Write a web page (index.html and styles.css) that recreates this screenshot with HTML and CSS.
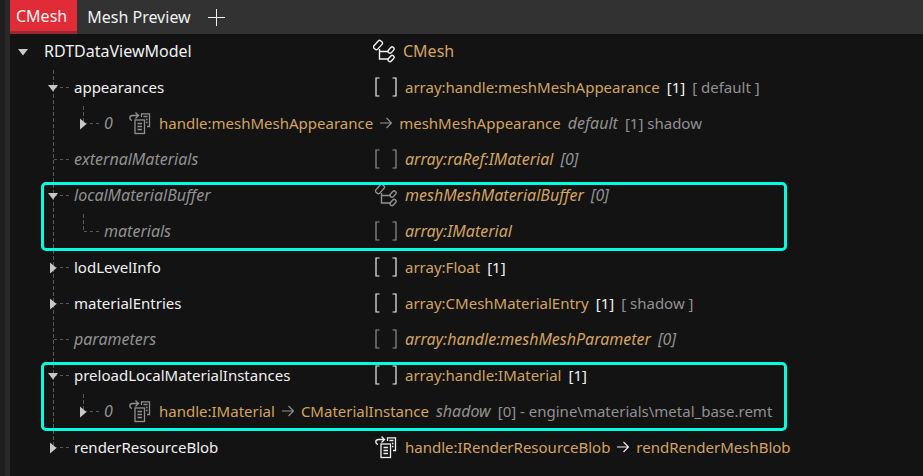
FILE: index.html
```html
<!DOCTYPE html>
<html lang="en">
<head>
<meta charset="utf-8">
<title>CMesh</title>
<link rel="stylesheet" href="styles.css">
</head>
<body>
<svg class="defs" aria-hidden="true">
  <symbol id="class" viewBox="0 0 22 24">
    <g fill="none" stroke="currentColor" stroke-width="1.4">
      <rect x="0" y="3.600" width="10" height="5" rx="1.800" transform="rotate(-48 5 6.100)"/>
      <path d="M6.500 10V20H15M6.500 12.500H15"/>
      <rect x="14.600" y="9.200" width="7" height="3.800" rx="1.800" transform="rotate(-48 18.100 11.100)"/>
      <rect x="14.600" y="17.600" width="7" height="3.800" rx="1.800" transform="rotate(-48 18.100 19.500)"/>
    </g>
  </symbol>
  <symbol id="array" viewBox="0 0 22 24">
    <path d="M4.500 3H1V21H4.500M17.500 3H21V21H17.500" fill="none" stroke="currentColor" stroke-width="1.200"/>
  </symbol>
  <symbol id="handle" viewBox="0 0 22 24">
    <g fill="none" stroke="currentColor" stroke-width="1.300">
      <path d="M3 9.500C0 8.500 0 4.500 3.500 4.500H9M6.500 1.500l3 3-3 3"/>
      <path d="M12.500 6V2.800H20.500V15.500H18M14.500 5.500H18.500M17 8.500H18.500M17 11.500H18.500"/>
      <rect x="6" y="9" width="9.500" height="13.500"/>
      <path d="M8.500 12.500H13M8.500 15.500H13M8.500 18.500H13"/>
    </g>
  </symbol>
  <symbol id="arrow" viewBox="0 0 12 12">
    <path d="M0 6H11.500M6.500 1l5 5-5 5" fill="none" stroke="currentColor" stroke-width="1.200"/>
  </symbol>
  <symbol id="open" viewBox="0 0 12 12">
    <path d="M1 3H11L6 9.500Z" fill="currentColor"/>
  </symbol>
  <symbol id="closed" viewBox="0 0 12 12">
    <path d="M3 .5V11.500L9.500 6Z" fill="currentColor"/>
  </symbol>
</svg>
<main class="panel">
  <nav class="tabs" aria-label="Views">
    <button class="tab active">CMesh</button>
    <button class="tab">Mesh Preview</button>
    <button class="add" aria-label="Add tab"><svg viewBox="0 0 18 18"><path d="M9.500 1V18M1 9.500H18" stroke="currentColor" stroke-width="1"/></svg></button>
  </nav>
  <ul class="tree">
    <li>
      <div class="row">
        <button class="gutter" aria-label="Collapse RDTDataViewModel"><svg><use href="#open"/></svg></button>
        <span class="name">RDTDataViewModel</span>
        <span class="value"><svg class="icon"><use href="#class"/></svg><span class="type">CMesh</span></span>
      </div>
      <ul class="branch">
        <li>
          <div class="row">
            <button class="gutter stub" aria-label="Collapse appearances"><svg><use href="#open"/></svg></button>
            <span class="name">appearances</span>
            <span class="value"><svg class="icon"><use href="#array"/></svg><span class="type">array:handle:meshMeshAppearance</span><span>[1]</span><span class="muted">[ default ]</span></span>
          </div>
          <ul class="branch">
            <li>
              <div class="row unset">
                <button class="gutter stub" aria-label="Expand item 0"><svg><use href="#closed"/></svg></button>
                <span class="index">0</span>
                <span class="value upright"><svg class="icon"><use href="#handle"/></svg><span class="type">handle:meshMeshAppearance</span><svg class="arrow"><use href="#arrow"/></svg><span class="type">meshMeshAppearance</span><em>default</em><span>[1] shadow</span></span>
              </div>
            </li>
          </ul>
        </li>
        <li>
          <div class="row unset">
            <span class="gutter stub"></span>
            <span class="name">externalMaterials</span>
            <span class="value"><svg class="icon"><use href="#array"/></svg><span class="type">array:raRef:IMaterial</span><span>[0]</span></span>
          </div>
        </li>
        <li class="marked">
          <div class="row unset">
            <button class="gutter stub" aria-label="Collapse localMaterialBuffer"><svg><use href="#open"/></svg></button>
            <span class="name">localMaterialBuffer</span>
            <span class="value"><svg class="icon"><use href="#class"/></svg><span class="type">meshMeshMaterialBuffer</span><span>[0]</span></span>
          </div>
          <ul class="branch">
            <li>
              <div class="row unset">
                <span class="gutter stub"></span>
                <span class="name">materials</span>
                <span class="value"><svg class="icon"><use href="#array"/></svg><span class="type">array:IMaterial</span></span>
              </div>
            </li>
          </ul>
        </li>
        <li>
          <div class="row">
            <button class="gutter stub" aria-label="Expand lodLevelInfo"><svg><use href="#closed"/></svg></button>
            <span class="name">lodLevelInfo</span>
            <span class="value"><svg class="icon"><use href="#array"/></svg><span class="type">array:Float</span><span>[1]</span></span>
          </div>
        </li>
        <li>
          <div class="row">
            <button class="gutter stub" aria-label="Expand materialEntries"><svg><use href="#closed"/></svg></button>
            <span class="name">materialEntries</span>
            <span class="value"><svg class="icon"><use href="#array"/></svg><span class="type">array:CMeshMaterialEntry</span><span>[1]</span><span class="muted">[ shadow ]</span></span>
          </div>
        </li>
        <li>
          <div class="row unset">
            <span class="gutter stub"></span>
            <span class="name">parameters</span>
            <span class="value"><svg class="icon"><use href="#array"/></svg><span class="type">array:handle:meshMeshParameter</span><span>[0]</span></span>
          </div>
        </li>
        <li class="marked">
          <div class="row">
            <button class="gutter stub" aria-label="Collapse preloadLocalMaterialInstances"><svg><use href="#open"/></svg></button>
            <span class="name">preloadLocalMaterialInstances</span>
            <span class="value"><svg class="icon"><use href="#array"/></svg><span class="type">array:handle:IMaterial</span><span>[1]</span></span>
          </div>
          <ul class="branch">
            <li>
              <div class="row unset">
                <button class="gutter stub" aria-label="Expand item 0"><svg><use href="#closed"/></svg></button>
                <span class="index">0</span>
                <span class="value upright"><svg class="icon"><use href="#handle"/></svg><span class="type">handle:IMaterial</span><svg class="arrow"><use href="#arrow"/></svg><span class="type">CMaterialInstance</span><em>shadow</em><span>[0] - engine\materials\metal_base.remt</span></span>
              </div>
            </li>
          </ul>
        </li>
        <li>
          <div class="row">
            <button class="gutter stub" aria-label="Expand renderResourceBlob"><svg><use href="#closed"/></svg></button>
            <span class="name">renderResourceBlob</span>
            <span class="value"><svg class="icon"><use href="#handle"/></svg><span class="type">handle:IRenderResourceBlob</span><svg class="arrow"><use href="#arrow"/></svg><span class="type">rendRenderMeshBlob</span></span>
          </div>
        </li>
      </ul>
    </li>
  </ul>
</main>
</body>
</html>
```
FILE: styles.css
```css
*, *::before, *::after { box-sizing: border-box; }
body {
  margin: 0;
  min-height: 100vh;
  display: flex;
  background: #131313;
  color: #f0f0f0;
  font: 16px/34px "Noto Sans", "Open Sans", sans-serif;
}
body::before {
  content: "";
  flex: 0 0 10px;
  background: #1f1f1f;
  border-right: 5px solid #292929;
}
.defs { display: none; }
.panel { flex: 1; min-width: 0; }
button {
  border: 0;
  padding: 0;
  background: none;
  color: inherit;
  font: inherit;
}
.tabs {
  display: flex;
  height: 34px;
  background: #323232;
}
.tab { padding: 0 10px; line-height: 32px; }
.tab.active {
  padding: 0 10px 0 6px;
  background: #e02c37;
  border-bottom: 3px solid #9b2733;
}
.add {
  display: flex;
  align-items: center;
  padding: 0 6px;
}
.add svg { width: 18px; height: 18px; }
.tree, .branch {
  margin: 0;
  padding: 0;
  list-style: none;
}
.tree { --label: 329px; padding-left: 5px; margin-top: -1px; }
.branch {
  --label: 301px;
  margin-left: 30px;
  font-size: 15px;
  background: repeating-linear-gradient(#585858 0 4px, transparent 4px 6px) no-repeat 8px 1px / 1px calc(100% - 19px);
}
.branch .branch { --label: 271px; }
.row {
  display: flex;
  height: 36px;
  line-height: 36px;
  white-space: nowrap;
}
.gutter {
  flex: 0 0 29px;
  display: flex;
  align-items: center;
  padding: 2px 0 0 2px;
  color: #c8c8c8;
}
.gutter svg { width: 12px; height: 12px; }
.stub {
  background: repeating-linear-gradient(90deg, #585858 0 3px, transparent 3px 6px) no-repeat 9px 18px / 15px 1px;
}
.name { flex: 0 0 var(--label); }
.index { flex: 0 0 25px; }
.value { display: flex; align-items: center; gap: 7px; }
.icon {
  flex: none;
  width: 22px;
  height: 24px;
  margin-right: 1px;
}
.arrow { width: 12px; height: 12px; }
.type { color: #d2a461; }
.muted { color: #919191; }
.unset { color: #919191; font-style: italic; font-size: 16px; }
.upright { font-style: normal; font-size: 15px; }
.upright em { font-size: 16px; }
.marked { position: relative; }
.marked::after {
  content: "";
  position: absolute;
  top: 5px;
  bottom: -2px;
  left: -4px;
  width: 746px;
  max-width: 100%;
  border: 3px solid #00ffe1;
  border-radius: 5px;
  pointer-events: none;
}
```
